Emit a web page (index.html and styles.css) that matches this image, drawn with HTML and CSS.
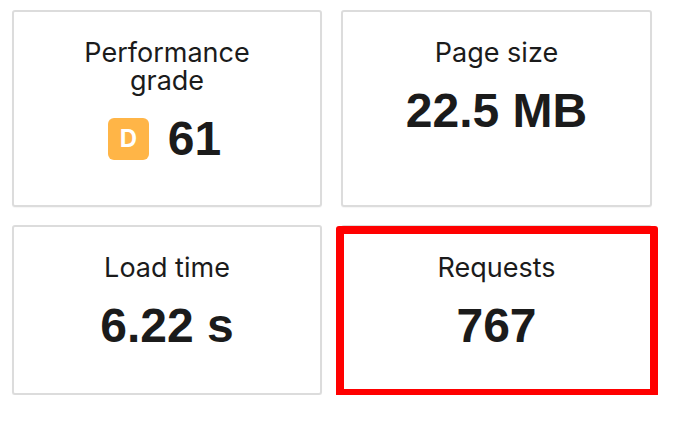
FILE: index.html
```html
<!DOCTYPE html>
<html>
<head>
<meta charset="utf-8">
<title>Summary</title>
<link rel="stylesheet" href="styles.css">
</head>
<body>
	<div class="summary">
		<div class="card">
			<div class="label">Performance<br>grade</div>
			<div class="value grade-row"><span class="grade">D</span>61</div>
		</div>
		<div class="card">
			<div class="label">Page size</div>
			<div class="value">22.5 MB</div>
		</div>
		<div class="card">
			<div class="label">Load time</div>
			<div class="value">6.22 s</div>
		</div>
		<div class="card marked">
			<div class="label">Requests</div>
			<div class="value">767</div>
		</div>
	</div>
</body>
</html>
```

FILE: styles.css
```css
body {
	margin: 0;
	background: #fff;
	font-family: Inter, "Noto Sans", Arial, sans-serif;
	color: #1b1b1b;
}

.summary {
	display: grid;
	grid-template-columns: 310px 311px;
	column-gap: 19px;
	row-gap: 18px;
	padding: 10px 0 0 12px;
}

.card {
	position: relative;
	border: 2px solid #dcdcdc;
	border-radius: 3px;
	text-align: center;
	padding: 27px 10px 0;
	box-shadow: 0 1px 1px rgba(0,0,0,0.04);
}

.card:nth-child(-n+2) {
	height: 166px;
}

.card:nth-child(n+3) {
	height: 139px;
}

.label {
	font-size: 27px;
	line-height: 28px;
}

.value {
	display: flex;
	justify-content: center;
	align-items: center;
	margin-top: 16px;
	font-family: "Liberation Sans", Arial, Helvetica, sans-serif;
	font-size: 48px;
	font-weight: 700;
	line-height: 56px;
}

.grade-row {
	padding-right: 5px;
}

.grade {
	width: 41px;
	height: 42px;
	margin-right: 19px;
	border-radius: 6px;
	background: #ffb547;
	color: #fff;
	font-family: Inter, "Noto Sans", sans-serif;
	font-size: 24px;
	line-height: 42px;
}

/* red frame drawn over the requests card */
.marked::after {
	content: "";
	position: absolute;
	top: -1px;
	left: -7px;
	right: -8px;
	bottom: -4px;
	border: 8px solid #ff0000;
	border-radius: 3px;
}
```
